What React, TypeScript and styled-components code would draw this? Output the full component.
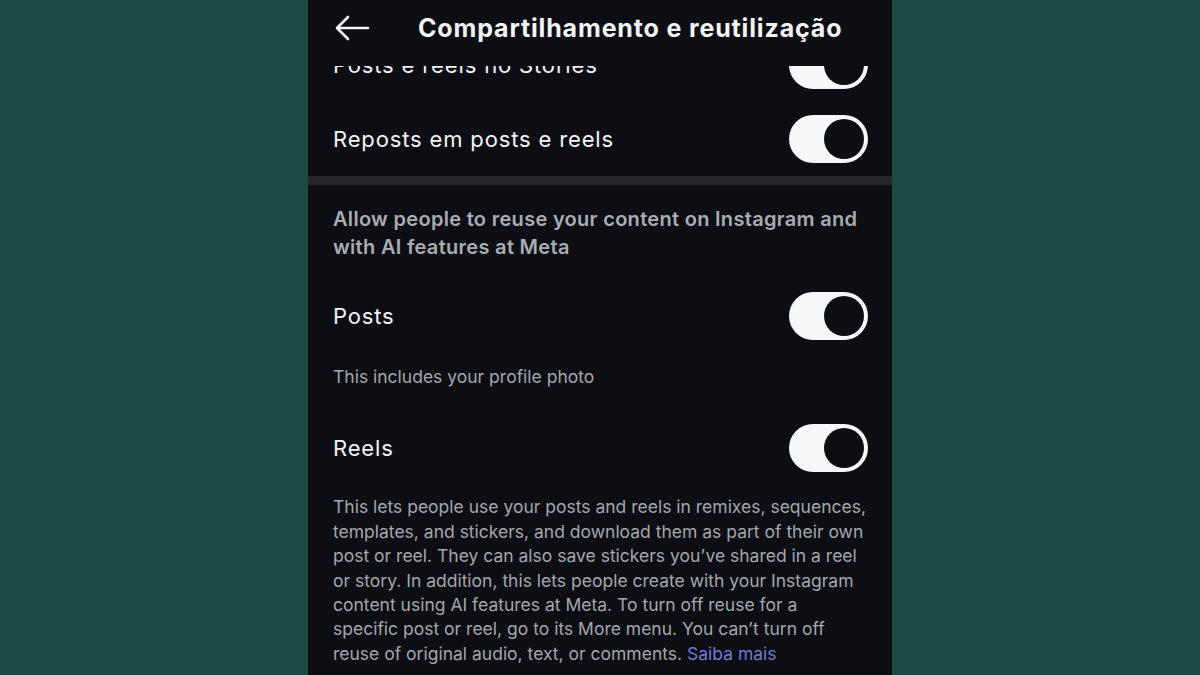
import React from 'react';
import styled, { createGlobalStyle } from 'styled-components';

const GlobalStyle = createGlobalStyle`
  html, body {
    margin: 0;
    padding: 0;
    height: 100%;
    background: #1c4a42;
  }
  #root {
    height: 100%;
  }
`;

const Backdrop = styled.div`
  display: flex;
  justify-content: center;
  width: 1200px;
  height: 675px;
  background: #1c4a42;
  overflow: hidden;
`;

const Phone = styled.div`
  display: flex;
  flex-direction: column;
  width: 584px;
  height: 675px;
  background: #0c0e13;
  font-family: Inter, 'Noto Sans', sans-serif;
  color: #f4f5f6;
  overflow: hidden;
`;

const Header = styled.header`
  display: flex;
  align-items: center;
  height: 55px;
  padding: 0 24px 11px 24px;
  flex-shrink: 0;
`;

const BackButton = styled.button`
  display: flex;
  align-items: center;
  justify-content: center;
  width: 40px;
  height: 40px;
  padding: 0;
  border: none;
  background: none;
  color: #f4f5f6;
  cursor: pointer;
`;

const Title = styled.h1`
  flex: 1;
  margin: 0 0 0 46px;
  font-size: 25px;
  font-weight: 700;
  letter-spacing: 0.85px;
  white-space: nowrap;
`;

const Body = styled.div`
  flex: 1;
  overflow: hidden;
`;

const Scroller = styled.div`
  margin-top: -38px;
`;

const Row = styled.div`
  display: flex;
  align-items: center;
  justify-content: space-between;
  height: 74px;
  padding: 0 24px 0 25px;
`;

const RowLabel = styled.span`
  font-size: 22px;
  font-weight: 400;
  letter-spacing: 0.85px;
`;

const Track = styled.div<{ $on: boolean }>`
  display: flex;
  align-items: center;
  justify-content: ${({ $on }) => ($on ? 'flex-end' : 'flex-start')};
  width: 79px;
  height: 48px;
  padding: 0 4px;
  box-sizing: border-box;
  border-radius: 24px;
  background: #f7f7f8;
  flex-shrink: 0;
`;

const Knob = styled.div`
  width: 40px;
  height: 40px;
  border-radius: 50%;
  background: #0c0e13;
`;

const Divider = styled.div`
  height: 9px;
  background: #25272d;
`;

const SectionHeading = styled.p`
  margin: 0;
  padding: 20px 20px 18px 25px;
  font-size: 20px;
  font-weight: 600;
  line-height: 28px;
  letter-spacing: 0.3px;
  color: #a9adb3;
`;

const Note = styled.p<{ $top?: number; $bottom?: number }>`
  margin: 0;
  padding: ${({ $top }) => $top ?? 0}px 22px ${({ $bottom }) => $bottom ?? 0}px 25px;
  font-size: 17.5px;
  line-height: 24.4px;
  color: #a4a7ad;
`;

const Link = styled.a`
  color: #6f7cd8;
  text-decoration: none;
`;

const Toggle = ({ on = true }: { on?: boolean }) => (
  <Track $on={on}>
    <Knob />
  </Track>
);

const ArrowLeft = () => (
  <svg width="36" height="28" viewBox="0 0 36 28" fill="none">
    <path
      d="M34 14H3M14 3L3 14l11 11"
      stroke="currentColor"
      strokeWidth="2.6"
      strokeLinecap="round"
      strokeLinejoin="round"
    />
  </svg>
);

const App = () => (
  <Backdrop>
    <GlobalStyle />
    <Phone>
      <Header>
        <BackButton aria-label="Voltar">
          <ArrowLeft />
        </BackButton>
        <Title>Compartilhamento e reutilização</Title>
      </Header>
      <Body>
        <Scroller>
          <Row>
            <RowLabel>Posts e reels no Stories</RowLabel>
            <Toggle />
          </Row>
          <Row>
            <RowLabel>Reposts em posts e reels</RowLabel>
            <Toggle />
          </Row>
          <Divider />
          <SectionHeading>
            Allow people to reuse your content on Instagram and with AI features at Meta
          </SectionHeading>
          <Row>
            <RowLabel>Posts</RowLabel>
            <Toggle />
          </Row>
          <Note $top={12} $bottom={22}>This includes your profile photo</Note>
          <Row>
            <RowLabel>Reels</RowLabel>
            <Toggle />
          </Row>
          <Note $top={10}>
            This lets people use your posts and reels in remixes, sequences, templates, and
            stickers, and download them as part of their own post or reel. They can also save
            stickers you’ve shared in a reel or story. In addition, this lets people create with
            your Instagram content using AI features at Meta. To turn off reuse for a
            <br />
            specific post or reel, go to its More menu. You can’t turn off reuse of original
            audio, text, or comments. <Link href="#">Saiba mais</Link>
          </Note>
        </Scroller>
      </Body>
    </Phone>
  </Backdrop>
);

export default App;
